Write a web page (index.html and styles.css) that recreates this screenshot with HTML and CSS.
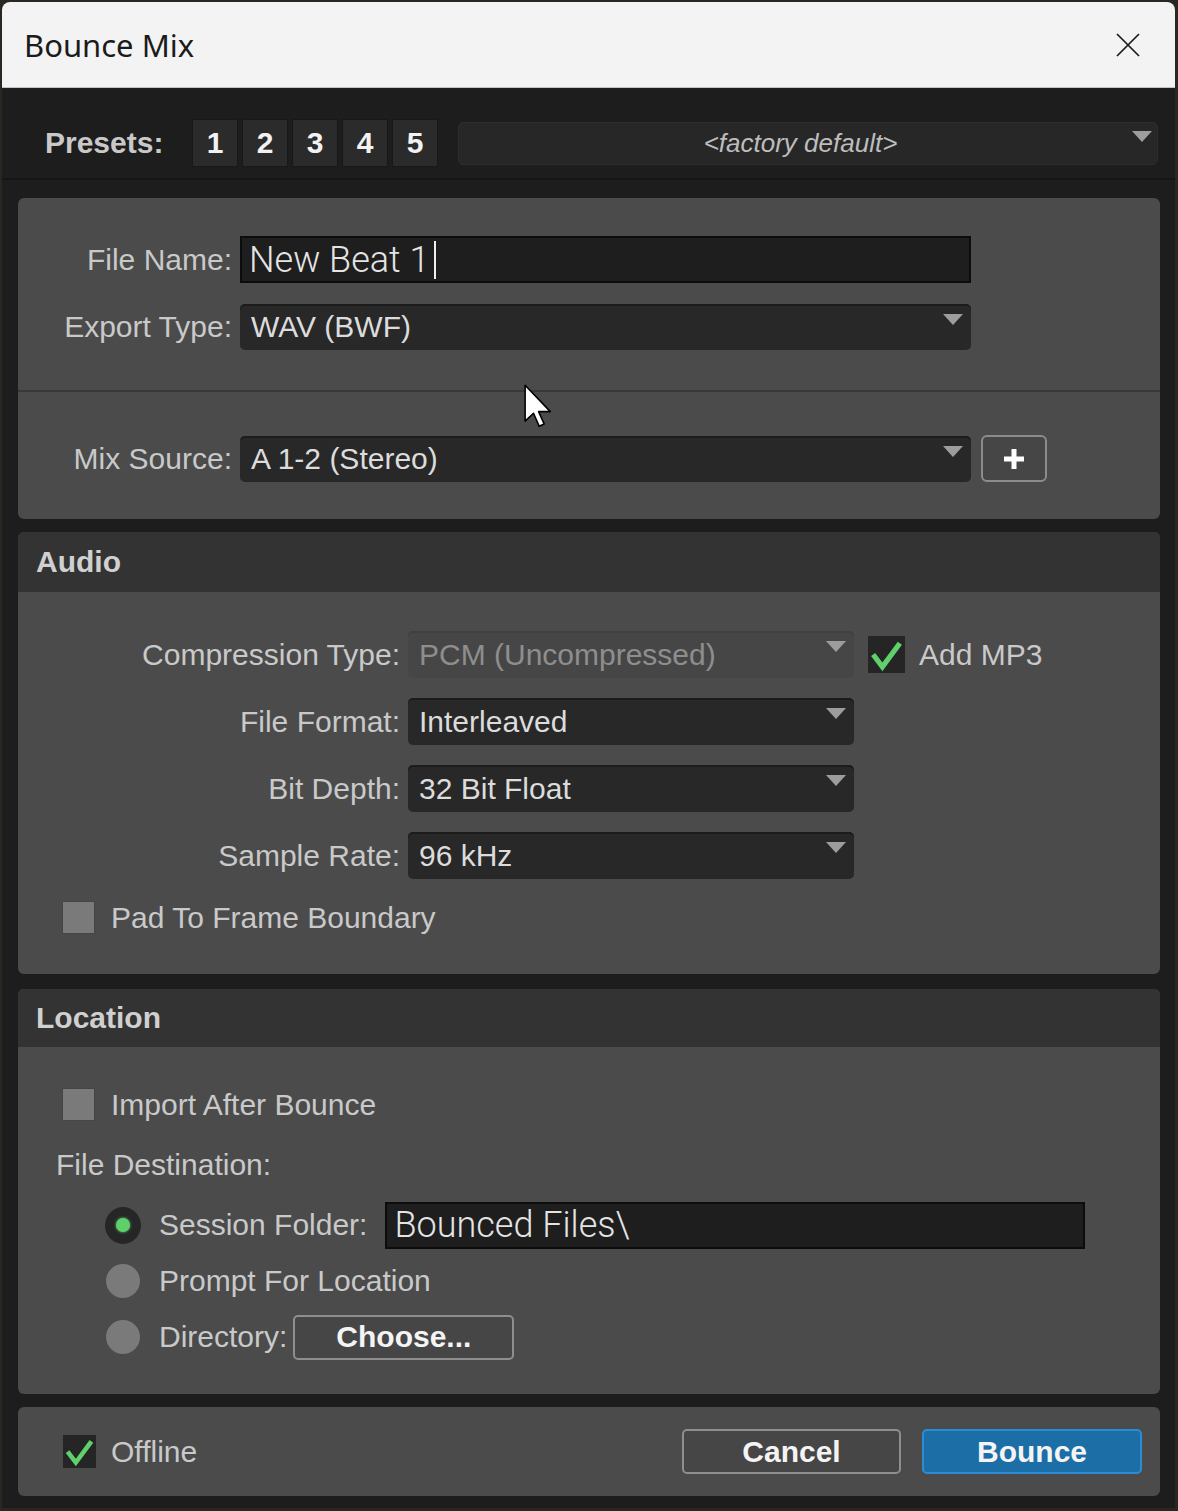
FILE: index.html
```html
<!DOCTYPE html>
<html lang="en">

<head>
  <meta charset="UTF-8" />
  <meta name="viewport" content="width=device-width, initial-scale=1.0" />
  <title>Bounce Mix</title>
  <link rel="stylesheet" href="styles.css">
</head>

<body>
  <div class="window">
    <!-- Barra de titulo -->
    <div class="titlebar">
      <span class="title">Bounce Mix</span>
      <svg class="close" width="24" height="24" viewBox="0 0 24 24">
        <path d="M1 1 L23 23 M23 1 L1 23" stroke="#1b1b1b" stroke-width="1.7" fill="none" />
      </svg>
    </div>

    <!-- Presets -->
    <div class="presets">
      <span class="presets-label">Presets:</span>
      <div class="preset-buttons">
        <button class="preset">1</button>
        <button class="preset">2</button>
        <button class="preset">3</button>
        <button class="preset">4</button>
        <button class="preset">5</button>
      </div>
      <div class="preset-menu">
        <span class="preset-name">&lt;factory default&gt;</span>
        <span class="arrow"></span>
      </div>
    </div>

    <div class="panels">
      <!-- Arquivo -->
      <section class="panel file-panel">
        <div class="field-row">
          <label>File Name:</label>
          <div class="text-input">New Beat 1<span class="caret"></span></div>
        </div>
        <div class="field-row second">
          <label>Export Type:</label>
          <div class="select">WAV (BWF)<span class="arrow"></span></div>
        </div>
        <div class="divider"></div>
        <div class="field-row">
          <label>Mix Source:</label>
          <div class="select">A 1-2 (Stereo)<span class="arrow"></span></div>
          <button class="plus-button">
            <svg width="22" height="22" viewBox="0 0 22 22">
              <path d="M11 1 V21 M1 11 H21" stroke="#ffffff" stroke-width="5" fill="none" />
            </svg>
          </button>
        </div>
      </section>

      <!-- Audio -->
      <section class="panel audio-panel">
        <div class="panel-head">Audio</div>
        <div class="panel-body audio-body">
          <div class="audio-grid">
            <label>Compression Type:</label>
            <div class="select disabled">PCM (Uncompressed)<span class="arrow"></span></div>
            <div class="check-item mp3">
              <span class="box checked large">
                <svg viewBox="0 0 36 36" width="37" height="37">
                  <path d="M5 18 L14 30 L31 7" stroke="#5fd06b" stroke-width="5" fill="none" />
                </svg>
              </span>
              <span class="check-label">Add MP3</span>
            </div>

            <label>File Format:</label>
            <div class="select">Interleaved<span class="arrow"></span></div>
            <span></span>

            <label>Bit Depth:</label>
            <div class="select">32 Bit Float<span class="arrow"></span></div>
            <span></span>

            <label>Sample Rate:</label>
            <div class="select">96 kHz<span class="arrow"></span></div>
            <span></span>
          </div>
          <div class="check-item pad">
            <span class="box"></span>
            <span class="check-label">Pad To Frame Boundary</span>
          </div>
        </div>
      </section>

      <!-- Location -->
      <section class="panel location-panel">
        <div class="panel-head">Location</div>
        <div class="panel-body location-body">
          <div class="check-item import">
            <span class="box"></span>
            <span class="check-label">Import After Bounce</span>
          </div>
          <p class="destination">File Destination:</p>
          <div class="radio-list">
            <div class="radio-row">
              <span class="radio-slot"><span class="radio selected"><span class="dot"></span></span></span>
              <span class="radio-label">Session Folder:</span>
              <div class="text-input folder">Bounced Files\</div>
            </div>
            <div class="radio-row">
              <span class="radio-slot"><span class="radio"></span></span>
              <span class="radio-label">Prompt For Location</span>
            </div>
            <div class="radio-row">
              <span class="radio-slot"><span class="radio"></span></span>
              <span class="radio-label">Directory:</span>
              <button class="button choose">Choose...</button>
            </div>
          </div>
        </div>
      </section>

      <!-- Rodape -->
      <section class="panel bottom-panel">
        <div class="check-item">
          <span class="box checked offline">
            <svg viewBox="0 0 36 36" width="33" height="33">
              <path d="M5 18 L14 30 L31 7" stroke="#5fd06b" stroke-width="5" fill="none" />
            </svg>
          </span>
          <span class="check-label">Offline</span>
        </div>
        <button class="button cancel">Cancel</button>
        <button class="button bounce">Bounce</button>
      </section>
    </div>

    <!-- Ponteiro do mouse -->
    <svg class="cursor" width="28" height="44" viewBox="-1 -1 25 39">
      <path d="M0 0 L0 32 L7.5 25 L12.5 36.5 L17 34.5 L12 23.5 L22.5 23.5 Z" fill="#ffffff" stroke="#000000"
        stroke-width="1.4" stroke-linejoin="round" />
    </svg>
  </div>
</body>

</html>
```

FILE: styles.css
```css
body {
  width: 1178px;
  height: 1511px;
  margin: 0;
  overflow: hidden;
  background-color: #2a2622;
  font-family: "Liberation Sans", Arial, sans-serif;
}

button {
  font-family: "Liberation Sans", Arial, sans-serif;
  cursor: default;
}

.window {
  position: relative;
  width: 1173px;
  height: 1506px;
  margin: 2px 0 0 2px;
  background-color: #1d1d1d;
  border-radius: 8px 8px 0 0;
  overflow: hidden;
}

/* barra de titulo */
.titlebar {
  height: 85px;
  display: flex;
  align-items: center;
  justify-content: space-between;
  padding: 0 35px 0 22px;
  background-color: #f3f3f3;
  border-bottom: 1px solid #c4c4c4;
}

.title {
  font-family: "Noto Sans", sans-serif;
  font-size: 31px;
  color: #1b1b1b;
}

/* presets */
.presets {
  height: 92px;
  box-sizing: border-box;
  display: flex;
  align-items: center;
  padding: 20px 17px 0 43px;
  border-bottom: 2px solid #151515;
}

.presets-label {
  width: 147px;
  font-size: 30px;
  font-weight: bold;
  color: #c9c9c9;
}

.preset-buttons {
  display: flex;
  gap: 4px;
}

.preset {
  width: 46px;
  height: 48px;
  padding: 0;
  background-color: #2b2b2b;
  border: 1px solid #181818;
  font-size: 30px;
  font-weight: bold;
  color: #f2f2f2;
}

.preset-menu {
  width: 700px;
  height: 43px;
  box-sizing: border-box;
  margin-left: 20px;
  display: flex;
  align-items: center;
  padding-left: 10px;
  background-color: #272727;
  border: 1px solid #2d2d2d;
  border-radius: 5px;
}

.preset-name {
  flex: 1;
  text-align: center;
  font-size: 26px;
  font-style: italic;
  color: #bdbdbd;
}

.preset-menu .arrow {
  margin: 8px 5px 0 0;
}

/* paineis */
.panels {
  padding: 18px 15px 11px 16px;
}

.panel {
  background-color: #4b4b4b;
  border-radius: 6px;
}

.panel-head {
  height: 60px;
  box-sizing: border-box;
  display: flex;
  align-items: center;
  padding-left: 18px;
  background-color: #333333;
  border-radius: 6px 6px 0 0;
  font-size: 30px;
  font-weight: bold;
  color: #d0d0d0;
}

.location-panel .panel-head {
  height: 58px;
}

label,
.check-label,
.radio-label,
.destination {
  font-size: 30px;
  color: #c9c9c9;
}

label {
  text-align: right;
}

/* painel de arquivo */
.file-panel {
  padding: 38px 0 37px;
}

.field-row {
  display: grid;
  grid-template-columns: 214px 731px auto;
  column-gap: 8px;
  align-items: center;
}

.field-row.second {
  margin-top: 21px;
}

.divider {
  height: 2px;
  margin: 40px 0 43px;
  background-color: #393939;
}

.text-input {
  height: 47px;
  box-sizing: border-box;
  display: flex;
  align-items: center;
  padding-left: 7px;
  background-color: #1e1e1e;
  border: 2px solid #0c0c0c;
  font-family: Roboto, sans-serif;
  font-weight: 300;
  font-size: 36px;
  color: #e4e4e4;
}

.caret {
  width: 2px;
  height: 38px;
  margin-left: 5px;
  background-color: #eeeeee;
}

.select {
  height: 46px;
  box-sizing: border-box;
  display: flex;
  align-items: center;
  padding-left: 11px;
  background-color: #282828;
  border-radius: 5px;
  box-shadow: inset 0 2px 0 #1c1c1c;
  font-size: 30px;
  color: #dcdcdc;
}

.select.disabled {
  background-color: #464646;
  box-shadow: inset 0 2px 0 #404040;
  color: #8e8e8e;
}

.arrow {
  width: 0;
  height: 0;
  margin: 10px 8px 0 auto;
  align-self: flex-start;
  border-left: 10px solid transparent;
  border-right: 10px solid transparent;
  border-top: 11px solid #9d9d9d;
}

.plus-button {
  width: 66px;
  height: 47px;
  margin-left: 2px;
  padding: 0;
  display: flex;
  align-items: center;
  justify-content: center;
  background-color: #464646;
  border: 2px solid #8c8c8c;
  border-radius: 6px;
}

/* audio */
.audio-body {
  padding: 39px 0 41px;
}

.audio-grid {
  display: grid;
  grid-template-columns: 382px 446px auto;
  column-gap: 8px;
  row-gap: 20px;
  align-items: center;
}

.audio-grid .select {
  height: 47px;
}

.check-item {
  height: 31px;
  display: flex;
  align-items: center;
}

.check-item.pad {
  margin-top: 23px;
  padding-left: 45px;
}

.check-item.mp3 {
  height: 37px;
  margin-left: 6px;
}

.box {
  width: 31px;
  height: 31px;
  margin-right: 17px;
  background-color: #7a7a7a;
  box-shadow: 0 0 0 1px #454545;
}

.box.checked {
  display: flex;
  background-color: #252525;
  box-shadow: none;
}

.box.large {
  width: 37px;
  height: 37px;
  margin-right: 14px;
}

.box.offline {
  width: 33px;
  height: 33px;
  margin-right: 15px;
}

/* location */
.location-body {
  padding: 42px 0 34px 45px;
}

.destination {
  margin: 27px 0 0 -7px;
  line-height: 36px;
}

.radio-list {
  margin-top: 19px;
  padding-left: 42px;
  display: flex;
  flex-direction: column;
  gap: 10px;
}

.radio-row {
  height: 46px;
  display: flex;
  align-items: center;
}

.radio-slot {
  width: 36px;
  margin-right: 18px;
  display: flex;
  justify-content: center;
}

.radio {
  width: 34px;
  height: 34px;
  border-radius: 50%;
  background-color: #7a7a7a;
}

.radio.selected {
  width: 37px;
  height: 37px;
  display: flex;
  align-items: center;
  justify-content: center;
  background-color: #262626;
}

.dot {
  width: 14px;
  height: 14px;
  border-radius: 50%;
  background-color: #5dd06a;
  box-shadow: 0 0 3px #5dd06a;
}

.text-input.folder {
  width: 700px;
  margin-left: 18px;
}

.button {
  height: 45px;
  box-sizing: border-box;
  background-color: #464646;
  border: 2px solid #8e8e8e;
  border-radius: 5px;
  font-size: 30px;
  font-weight: bold;
  color: #f4f4f4;
}

.button.choose {
  width: 221px;
  margin-left: 6px;
}

/* rodape */
.bottom-panel {
  height: 89px;
  box-sizing: border-box;
  display: flex;
  align-items: center;
  padding: 0 18px 0 45px;
}

.bottom-panel .check-item {
  height: 33px;
}

.button.cancel {
  width: 219px;
  margin-left: auto;
}

.button.bounce {
  width: 220px;
  margin-left: 21px;
  background-color: #1c6ea6;
  border-color: #2b8bd3;
}

.panel + .panel {
  margin-top: 13px;
}

.audio-panel + .location-panel {
  margin-top: 15px;
}

.cursor {
  position: absolute;
  left: 522px;
  top: 382px;
}
```
